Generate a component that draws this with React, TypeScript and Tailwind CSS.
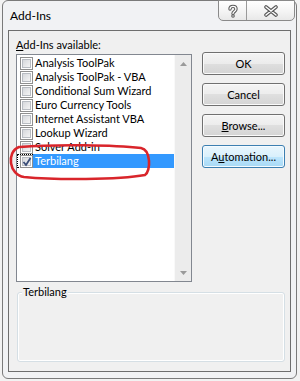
import React from "react";

const items = [
  "Analysis ToolPak",
  "Analysis ToolPak - VBA",
  "Conditional Sum Wizard",
  "Euro Currency Tools",
  "Internet Assistant VBA",
  "Lookup Wizard",
  "Solver Add-in",
  "Terbilang",
];

function CheckBox({ checked }: { checked?: boolean }) {
  return (
    <div className="relative w-[13px] h-[13px] shrink-0 border border-[#8f8f8f] bg-white p-[1px]">
      <div className="w-full h-full border border-[#b8bcc2] bg-[linear-gradient(135deg,#d6d8dc_0%,#f4f4f4_100%)]" />
      {checked && (
        <svg className="absolute left-[1px] top-[1px]" width="10" height="10" viewBox="0 0 10 10">
          <path d="M1.5 5 L4 8 L8.5 1" fill="none" stroke="#3a4d78" strokeWidth="1.8" />
        </svg>
      )}
    </div>
  );
}

function Btn({ children, focused }: { children: React.ReactNode; focused?: boolean }) {
  return (
    <div
      className={
        focused
          ? "h-[23px] w-[83px] rounded-[3px] border border-[#3c7fb1] bg-[linear-gradient(#eaf6fd_0%,#d9f0fc_50%,#bee6fd_50%,#a7d9f5_100%)] shadow-[inset_0_0_0_1px_#f4fbff] flex items-center justify-center text-[11px] leading-[14px] text-black"
          : "h-[23px] w-[83px] rounded-[3px] border border-[#707070] bg-[linear-gradient(#f4f4f4_0%,#ececec_50%,#dfdfdf_50%,#d4d4d4_100%)] shadow-[inset_0_0_0_1px_#fafafa] flex items-center justify-center text-[11px] leading-[14px] text-black"
      }
    >
      {children}
    </div>
  );
}

export default function App() {
  return (
    <div className="relative w-[300px] h-[381px] overflow-hidden bg-[#f2f2f2] font-['Lato','Liberation_Sans',Arial,sans-serif]">
      {/* window */}
      <div className="ml-[2px] w-[295px] h-[379px] rounded-[6px] border border-[#7a7a7a] bg-[#f1f2f4] flex flex-col">
        {/* title bar */}
        <div className="relative h-[29px] shrink-0 flex items-center pl-[7px] pt-[1px]">
          <span className="text-[12px] leading-[14px] text-black">Add-Ins</span>
          <div className="absolute right-[1px] top-[-1px] h-[21px] w-[77px] flex border border-[#8a8a8a] rounded-b-[5px] overflow-hidden bg-[linear-gradient(#ffffff_0%,#f3f3f3_60%,#e8e8e8_100%)]">
            <div className="w-[28px] h-full border-r border-[#9a9a9a] flex items-center justify-center">
              <svg width="12" height="14" viewBox="0 0 12 14">
                <path d="M3 5 C3 1.5, 9 1.5, 9 5 C9 7.5, 6 7.5, 6 9.5" fill="none" stroke="#5a5a5a" strokeWidth="3.4" strokeLinecap="round" />
                <circle cx="6" cy="12" r="1.8" fill="#5a5a5a" />
                <path d="M3 5 C3 1.5, 9 1.5, 9 5 C9 7.5, 6 7.5, 6 9.5" fill="none" stroke="#ffffff" strokeWidth="1.3" strokeLinecap="round" />
                <circle cx="6" cy="12" r="0.7" fill="#ffffff" />
              </svg>
            </div>
            <div className="flex-1 h-full flex items-center justify-center">
              <svg width="16" height="12" viewBox="0 0 16 12">
                <path d="M3 2 L13 10 M13 2 L3 10" stroke="#5a5a5a" strokeWidth="3.6" strokeLinecap="round" />
                <path d="M3 2 L13 10 M13 2 L3 10" stroke="#ffffff" strokeWidth="1.4" strokeLinecap="round" />
              </svg>
            </div>
          </div>
        </div>
        {/* client area */}
        <div className="mx-[5px] w-[283px] h-[342px] border border-[#6e6e6e] bg-[#f0f0f0] flex flex-col">
          <div className="flex pl-[7px] pt-[7px]">
            <div className="flex flex-col">
              <div className="text-[11px] leading-[14px] text-black h-[14px]">
                <span className="underline">A</span>dd-Ins available:
              </div>
              <div className="mt-[2px] w-[176px] h-[228px] border border-[#828790] bg-white flex">
                <div className="flex-1 flex flex-col pt-[1px]">
                  {items.map((it, i) => {
                    const sel = i === items.length - 1;
                    return (
                      <div key={it} className="h-[14px] flex items-center">
                        <div
                          className={
                            sel
                              ? "h-[14px] w-[16px] flex items-center pl-[2px] border-l border-t border-b border-dotted border-black"
                              : "h-[14px] w-[16px] flex items-center pl-[3px]"
                          }
                        >
                          <CheckBox checked={sel} />
                        </div>
                        <div
                          className={
                            sel
                              ? "flex-1 h-[14px] bg-[#3399ff] text-white pl-[2px] text-[11px] leading-[14px] whitespace-nowrap"
                              : "flex-1 h-[14px] text-black pl-[2px] text-[11px] leading-[14px] whitespace-nowrap"
                          }
                        >
                          {it}
                        </div>
                      </div>
                    );
                  })}
                </div>
                <div className="w-[17px] h-full bg-[#ececec] border-l border-[#f9f9f9] flex flex-col justify-between">
                  <div className="h-[17px] flex items-center justify-center">
                    <svg width="7" height="4" viewBox="0 0 7 4">
                      <path d="M0 4 L3.5 0 L7 4 Z" fill="#9a9a9a" />
                    </svg>
                  </div>
                  <div className="h-[17px] flex items-center justify-center">
                    <svg width="7" height="4" viewBox="0 0 7 4">
                      <path d="M0 0 L3.5 4 L7 0 Z" fill="#9a9a9a" />
                    </svg>
                  </div>
                </div>
              </div>
            </div>
            <div className="ml-[10px] mt-[14px] flex flex-col gap-[8px]">
              <Btn>OK</Btn>
              <Btn>Cancel</Btn>
              <Btn>
                <span>
                  <span className="underline">B</span>rowse...
                </span>
              </Btn>
              <Btn focused>
                <span>
                  A<span className="underline">u</span>tomation...
                </span>
              </Btn>
            </div>
          </div>
          {/* group box */}
          <div className="relative ml-[8px] mt-[10px] w-[268px] h-[70px] rounded-[3px] border border-[#d5dfe5] shadow-[inset_0_0_0_1px_#ffffff]">
            <span className="absolute left-[4px] top-[-8px] px-[1px] bg-[#f0f0f0] text-[11px] leading-[14px] text-black">
              Terbilang
            </span>
          </div>
        </div>
      </div>
      {/* red hand-drawn annotation */}
      <svg className="absolute left-0 top-0 pointer-events-none" width="300" height="381" viewBox="0 0 300 381">
        <path
          d="M20 147 C55 144, 115 145, 141 148 C151 150, 151 171, 145 175 C118 180, 55 180, 24 177 C9 175, 6 152, 19 147"
          fill="none"
          stroke="#d9252b"
          strokeWidth="2.6"
          strokeLinecap="round"
        />
      </svg>
    </div>
  );
}
